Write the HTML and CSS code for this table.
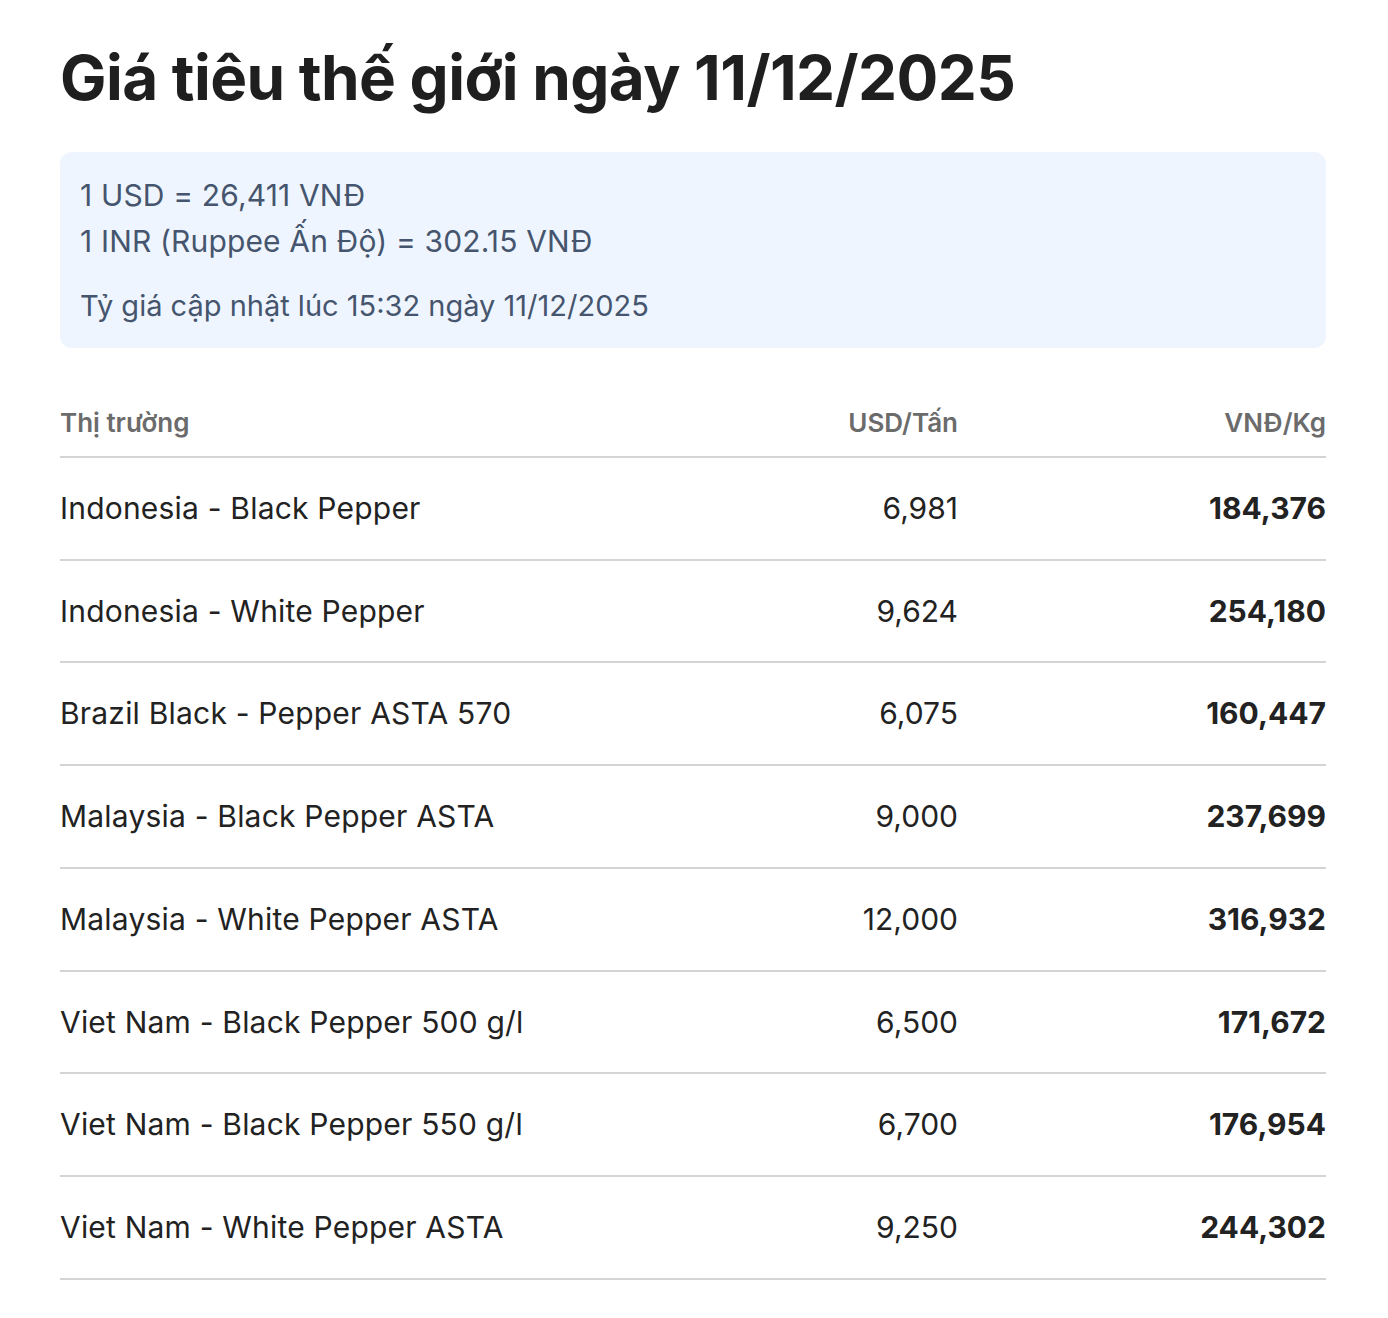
FILE: index.html
```html
<!DOCTYPE html>
<html lang="vi">
<head>
<meta charset="utf-8">
<title>Giá tiêu thế giới ngày 11/12/2025</title>
<link rel="stylesheet" href="styles.css">
</head>
<body>
<main class="page">
  <h1 class="title">Giá tiêu thế giới ngày 11/12/2025</h1>
  <section class="rates">
    <p class="rate">1 USD = 26,411 VNĐ</p>
    <p class="rate">1 INR (Ruppee Ấn Độ) = 302.15 VNĐ</p>
    <p class="rate rate-note">Tỷ giá cập nhật lúc 15:32 ngày 11/12/2025</p>
  </section>
  <div class="table">
    <div class="row head">
      <div class="cell">Thị trường</div>
      <div class="cell num">USD/Tấn</div>
      <div class="cell num">VNĐ/Kg</div>
    </div>
    <div class="row"><div class="cell">Indonesia - Black Pepper</div><div class="cell num">6,981</div><div class="cell num strong">184,376</div></div>
    <div class="row"><div class="cell">Indonesia - White Pepper</div><div class="cell num">9,624</div><div class="cell num strong">254,180</div></div>
    <div class="row"><div class="cell">Brazil Black - Pepper ASTA 570</div><div class="cell num">6,075</div><div class="cell num strong">160,447</div></div>
    <div class="row"><div class="cell">Malaysia - Black Pepper ASTA</div><div class="cell num">9,000</div><div class="cell num strong">237,699</div></div>
    <div class="row"><div class="cell">Malaysia - White Pepper ASTA</div><div class="cell num">12,000</div><div class="cell num strong">316,932</div></div>
    <div class="row"><div class="cell">Viet Nam - Black Pepper 500 g/l</div><div class="cell num">6,500</div><div class="cell num strong">171,672</div></div>
    <div class="row"><div class="cell">Viet Nam - Black Pepper 550 g/l</div><div class="cell num">6,700</div><div class="cell num strong">176,954</div></div>
    <div class="row"><div class="cell">Viet Nam - White Pepper ASTA</div><div class="cell num">9,250</div><div class="cell num strong">244,302</div></div>
  </div>
</main>
</body>
</html>
```
FILE: styles.css
```css
* { box-sizing: border-box; }
html, body { margin: 0; padding: 0; background: #fff; }
body {
  font-family: Inter, "Noto Sans", "Liberation Sans", sans-serif;
  color: #222;
}
.page {
  padding: 40px 62px 40px 60px;
}
.title {
  margin: 0;
  font-size: 62px;
  line-height: 76px;
  font-weight: 700;
  letter-spacing: -0.009em;
  color: #1f1f1f;
}
.rates {
  margin-top: 36px;
  background: #eff5fe;
  border-radius: 12px;
  padding: 20px 20px 19px;
  color: #46556e;
}
.rate {
  margin: 0;
  font-size: 30px;
  line-height: 46px;
  letter-spacing: 0.005em;
}
.rate-note {
  margin-top: 19px;
  font-size: 29px;
  letter-spacing: 0;
}
.table {
  margin-top: 57px;
}
.row {
  display: grid;
  grid-template-columns: 1fr 300px 368px;
  border-bottom: 2px solid #d4d4d4;
  font-size: 30px;
  line-height: 36.7px;
}
.row .cell {
  padding: 32px 0;
  letter-spacing: 0.2px;
}
.row .num { letter-spacing: 0; }
.head {
  font-size: 26px;
  font-weight: 600;
  color: #6b6b6b;
}
.head .cell {
  padding: 0 0 15px;
  line-height: 36px;
  letter-spacing: 0;
}
.num { text-align: right; }
.strong { font-weight: 700; }
```
